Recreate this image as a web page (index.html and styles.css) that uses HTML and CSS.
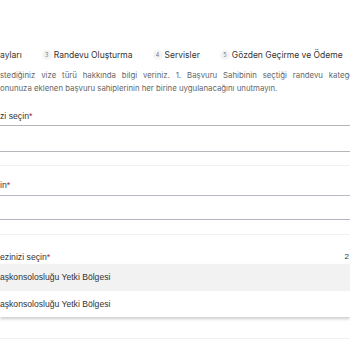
FILE: index.html
```html
<!DOCTYPE html>
<html lang="tr">
<head>
    <meta charset="UTF-8">
    <meta name="viewport" content="width=device-width, initial-scale=1.0">
    <title>Randevu Ayrıntıları</title>
    <link rel="stylesheet" href="styles.css">
</head>
<body>
    <div class="steps">
        <div class="step">ayları</div>
        <div class="step"><span class="num">3</span>Randevu Oluşturma</div>
        <div class="step"><span class="num">4</span>Servisler</div>
        <div class="step"><span class="num">5</span>Gözden Geçirme ve Ödeme</div>
    </div>

    <div class="desc">
        <span class="line full">stediğiniz vize türü hakkında bilgi veriniz. 1. Başvuru Sahibinin seçtiği randevu kategorisinin</span>
        <span class="line">onunuza eklenen başvuru sahiplerinin her birine uygulanacağını unutmayın.</span>
    </div>

    <div class="field first">
        <label class="label">zi seçin<span class="req">*</span></label>
        <div class="select"></div>
    </div>

    <div class="field second">
        <label class="label">in<span class="req">*</span></label>
        <div class="select alt"></div>
    </div>

    <div class="field third">
        <div class="label-row">
            <label class="label">ezinizi seçin<span class="req">*</span></label>
            <span class="count">2</span>
        </div>
        <ul class="options">
            <li class="active">aşkonsolosluğu Yetki Bölgesi</li>
            <li>aşkonsolosluğu Yetki Bölgesi</li>
        </ul>
    </div>

    <div class="field last"></div>
</body>
</html>
```

FILE: styles.css
```css
body {
    margin: 0;
    background: #fff;
    font-family: Inter, "Liberation Sans", sans-serif;
    color: #333;
    overflow: hidden;
    height: 350px;
}
.steps {
    display: flex;
    align-items: center;
    gap: 20px;
    padding-top: 49px;
    font-size: 8.5px;
    line-height: 12px;
    color: #333;
    white-space: nowrap;
}
.step {
    display: flex;
    align-items: center;
}
.num {
    width: 10px;
    height: 10px;
    border-radius: 50%;
    background: #f4f4f4;
    color: #777;
    font-size: 5.5px;
    display: inline-flex;
    align-items: center;
    justify-content: center;
    margin-right: 2px;
}
.desc {
    margin-top: 8px;
    font-size: 7.8px;
    line-height: 13px;
    color: #666;
    white-space: nowrap;
}
.desc .line {
    display: block;
}
.desc .line.full {
    width: 376px;
    white-space: normal;
    text-align: justify;
    text-align-last: justify;
}
.field {
    border-top: 1px solid #f1f1f1;
}
.field.first {
    border-top: none;
    margin-top: 15px;
}
.field.second {
    margin-top: 13px;
    padding-top: 13px;
}
.field.third {
    margin-top: 14px;
    padding-top: 16px;
}
.field.last {
    margin-top: 21px;
}
.label-row {
    display: flex;
    justify-content: space-between;
}
.label {
    display: block;
    font-family: "Liberation Sans", Arial, sans-serif;
    font-size: 8.7px;
    line-height: 12px;
    color: #333;
}
.req {
    color: #a3284e;
}
.count {
    font-family: "Liberation Sans", Arial, sans-serif;
    font-size: 8px;
    line-height: 12px;
    margin-right: 1px;
}
.select {
    margin-top: 3px;
    height: 25px;
    border-top: 1px solid #b4b6bc;
    border-bottom: 1px solid #b4b6bc;
}
.select.alt {
    margin-top: 4px;
    height: 23px;
    border-top-color: #b8bac2;
    border-bottom-color: #b4b4c8;
}
.options {
    list-style: none;
    margin: 1px 0 0;
    padding: 0;
    font-family: "Liberation Sans", Arial, sans-serif;
    font-size: 8.6px;
    color: #333;
    box-shadow: 0 2px 3px rgba(0,0,0,0.2);
}
.options li {
    height: 26px;
    line-height: 26px;
    background: #fff;
}
.options li.active {
    height: 27px;
    line-height: 27px;
    background: #f2f2f2;
}
```
